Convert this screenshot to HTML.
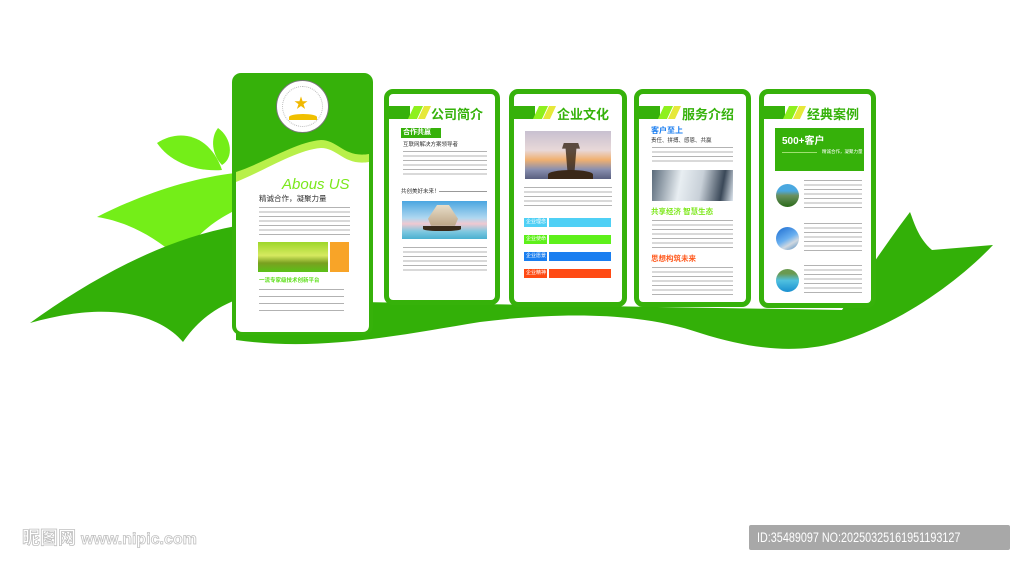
<!DOCTYPE html>
<html><head><meta charset="utf-8"><style>
*{margin:0;padding:0;box-sizing:border-box}
body{width:1024px;height:565px;background:#fff;position:relative;overflow:hidden;font-family:"Liberation Sans","Noto Sans CJK SC",sans-serif}
.a{position:absolute}
.card{position:absolute;background:#fff;border:5px solid #36b10a;border-radius:9px}
.lines{position:absolute;background:repeating-linear-gradient(#fff 0,#fff 2px,#9a9a9a 2px,#9a9a9a 3px,#fff 3px,#fff 4.5px);opacity:.75}
.hd{position:absolute;height:13px;left:0}
.title{position:absolute;font-weight:bold;color:#35b20a;font-size:13px;white-space:nowrap}
.lab{position:absolute;color:#fff;font-size:5px;line-height:9px;padding-left:2px;white-space:nowrap}
</style></head><body>
<svg class="a" style="left:0;top:0" width="1024" height="565">
<path d="M236,300 L236,340 C320,352 400,335 480,322 C560,312 640,312 700,333 C760,352 800,352 835,343 C900,325 960,280 993,245 L932,250 C918,238 914,222 910,212 C885,245 862,280 842,310 L236,300Z" fill="#33b008"/>
<path d="M97,217 C140,195 190,178 236,173 L236,210 C215,220 195,235 180,260 C160,240 130,222 97,217Z" fill="#74ee18"/>
<path d="M157,143 C180,128 210,135 222,170 C195,172 170,162 157,143Z" fill="#74ee18"/>
<path d="M218,128 C232,138 234,158 222,165 C212,155 210,138 218,128Z" fill="#74ee18"/>
<path d="M30,323 C90,280 160,240 236,226 L236,300 C210,310 195,325 183,342 C160,315 110,300 30,323Z" fill="#33b008"/>
</svg>

<!-- panel 1 -->
<div class="a" style="left:232px;top:73px;width:141px;height:262px;background:#36b10a;border-radius:9px"></div>
<svg class="a" style="left:236px;top:140px" width="133" height="192">
<path d="M0,32 C30,22 60,2 85,0 C102,0 108,18 133,14 L133,185 Q133,192 126,192 L7,192 Q0,192 0,185Z" fill="#b8f04a"/>
<path d="M0,42 C30,30 60,10 85,8 C102,8 108,26 133,22 L133,185 Q133,192 126,192 L7,192 Q0,192 0,185Z" fill="#fff"/>
</svg>
<div class="a" style="left:276px;top:80px;width:53px;height:53px;border-radius:50%;background:#fff;border:1px solid #777"></div>
<div class="a" style="left:282px;top:86px;width:41px;height:41px;border-radius:50%;border:1px dotted #bbb"></div>
<div class="a" style="left:289px;top:114px;width:28px;height:6px;background:#f0c000;border-radius:50% 50% 0 0"></div>
<div class="a" style="left:294px;top:96px;font-size:14px;color:#f0b800;line-height:14px">★</div>
<div class="a" style="left:282px;top:176px;font-size:15px;font-style:italic;color:#7be81c">Abous US</div>
<div class="a" style="left:259px;top:193px;font-size:7.5px;color:#333">精诚合作，凝聚力量</div>
<div class="lines" style="left:259px;top:205px;width:91px;height:32px"></div>
<div class="a" style="left:258px;top:242px;width:70px;height:30px;background:linear-gradient(180deg,#9ed62a,#d6ea60 45%,#7aa020 70%,#5ac018)"></div>
<div class="a" style="left:330px;top:242px;width:19px;height:30px;background:#f8a428"></div>
<div class="a" style="left:259px;top:276px;font-size:5.5px;color:#5ee01a;font-weight:bold">一流专家级技术创新平台</div>
<div class="lines" style="left:259px;top:286px;width:85px;height:25px;background:repeating-linear-gradient(#fff 0,#fff 3px,#999 3px,#999 4px,#fff 4px,#fff 7px)"></div>

<!-- panel 2 -->
<div class="card" style="left:384px;top:89px;width:116px;height:216px"></div>
<div class="hd" style="left:389px;top:106px;width:21px;background:#36b10a"></div>
<div class="a" style="left:411px;top:106px;width:9px;height:13px;background:#8ef01e;transform:skewX(-25deg)"></div>
<div class="a" style="left:421px;top:106px;width:7px;height:13px;background:#e6e83a;transform:skewX(-25deg)"></div>
<div class="title" style="left:431px;top:104px">公司简介</div>
<div class="a" style="left:401px;top:128px;width:40px;height:10px;background:#36b10a;color:#fff;font-size:7px;line-height:10px;padding-left:2px;font-weight:bold">合作共赢</div>
<div class="a" style="left:403px;top:140px;font-size:5.5px;color:#333">互联网解决方案领导者</div>
<div class="lines" style="left:403px;top:149px;width:84px;height:27px"></div>
<div class="a" style="left:401px;top:187px;font-size:5.5px;color:#333">共创美好未来！</div>
<div class="a" style="left:439px;top:191px;width:48px;height:1px;background:#999"></div>
<div class="a" style="left:402px;top:201px;width:85px;height:38px;background:linear-gradient(180deg,#4aa6e0,#b0d8f0 45%,#f0c8d0 60%,#80c8e0 80%,#4ab0d0)"></div>
<div class="a" style="left:428px;top:205px;width:30px;height:23px;background:linear-gradient(#e8ddc8,#b8a080);clip-path:polygon(10% 90%,90% 90%,100% 60%,70% 0,30% 0,0 60%)"></div>
<div class="a" style="left:423px;top:226px;width:38px;height:5px;background:#3a2a1a;border-radius:0 0 40% 40%"></div>
<div class="lines" style="left:403px;top:245px;width:84px;height:26px"></div>

<!-- panel 3 -->
<div class="card" style="left:509px;top:89px;width:118px;height:218px"></div>
<div class="hd" style="left:514px;top:106px;width:21px;background:#36b10a"></div>
<div class="a" style="left:536px;top:106px;width:9px;height:13px;background:#8ef01e;transform:skewX(-25deg)"></div>
<div class="a" style="left:546px;top:106px;width:7px;height:13px;background:#e6e83a;transform:skewX(-25deg)"></div>
<div class="title" style="left:557px;top:104px">企业文化</div>
<div class="a" style="left:525px;top:131px;width:86px;height:48px;background:linear-gradient(180deg,#c8c0d0,#e8d8d8 40%,#f0b070 60%,#8a90b0 80%,#5a6080)"></div>
<div class="a" style="left:562px;top:143px;width:18px;height:28px;background:#3a2818;opacity:.8;clip-path:polygon(0 20%,20% 20%,30% 100%,70% 100%,80% 20%,100% 20%,90% 0,10% 0)"></div>
<div class="a" style="left:548px;top:170px;width:45px;height:9px;background:#3a2818;border-radius:50% 50% 0 0"></div>
<div class="lines" style="left:524px;top:185px;width:88px;height:24px"></div>
<div class="a" style="left:524px;top:218px;width:23px;height:9px;background:#4fd0f5"></div><div class="lab" style="left:524px;top:218px">企业理念</div>
<div class="a" style="left:549px;top:218px;width:62px;height:9px;background:#4fd0f5"></div>
<div class="a" style="left:524px;top:235px;width:23px;height:9px;background:#5ef01a"></div><div class="lab" style="left:524px;top:235px">企业使命</div>
<div class="a" style="left:549px;top:235px;width:62px;height:9px;background:#5ef01a"></div>
<div class="a" style="left:524px;top:252px;width:23px;height:9px;background:#1a7ef0"></div><div class="lab" style="left:524px;top:252px">企业愿景</div>
<div class="a" style="left:549px;top:252px;width:62px;height:9px;background:#1a7ef0"></div>
<div class="a" style="left:524px;top:269px;width:23px;height:9px;background:#ff4a14"></div><div class="lab" style="left:524px;top:269px">企业精神</div>
<div class="a" style="left:549px;top:269px;width:62px;height:9px;background:#ff4a14"></div>

<!-- panel 4 -->
<div class="card" style="left:634px;top:89px;width:117px;height:218px"></div>
<div class="hd" style="left:639px;top:106px;width:21px;background:#36b10a"></div>
<div class="a" style="left:661px;top:106px;width:9px;height:13px;background:#8ef01e;transform:skewX(-25deg)"></div>
<div class="a" style="left:671px;top:106px;width:7px;height:13px;background:#e6e83a;transform:skewX(-25deg)"></div>
<div class="title" style="left:682px;top:104px">服务介绍</div>
<div class="a" style="left:651px;top:125px;font-size:8px;color:#1a7ef0;font-weight:bold">客户至上</div>
<div class="a" style="left:651px;top:136px;font-size:5.5px;color:#333">责任、拼搏、感恩、共赢</div>
<div class="lines" style="left:652px;top:145px;width:81px;height:18px"></div>
<div class="a" style="left:652px;top:170px;width:81px;height:31px;background:linear-gradient(100deg,#5a6a7a,#e8eef2 35%,#c8d0d8 60%,#3a4858 85%,#e0e8f0)"></div>
<div class="a" style="left:651px;top:206px;font-size:7.5px;color:#7ee81c;font-weight:bold">共享经济 智慧生态</div>
<div class="lines" style="left:652px;top:218px;width:81px;height:30px"></div>
<div class="a" style="left:651px;top:253px;font-size:7.5px;color:#ff5a1e;font-weight:bold">思想构筑未来</div>
<div class="lines" style="left:652px;top:265px;width:81px;height:30px"></div>

<!-- panel 5 -->
<div class="card" style="left:759px;top:89px;width:117px;height:219px"></div>
<div class="hd" style="left:764px;top:106px;width:21px;background:#36b10a"></div>
<div class="a" style="left:786px;top:106px;width:9px;height:13px;background:#8ef01e;transform:skewX(-25deg)"></div>
<div class="a" style="left:796px;top:106px;width:7px;height:13px;background:#e6e83a;transform:skewX(-25deg)"></div>
<div class="title" style="left:807px;top:104px">经典案例</div>
<div class="a" style="left:775px;top:128px;width:89px;height:43px;background:#36b10a"></div>
<div class="a" style="left:782px;top:132px;font-size:10px;color:#fff;font-weight:bold">500+客户</div>
<div class="a" style="left:782px;top:152px;width:35px;height:1px;background:#9ee070"></div>
<div class="a" style="left:822px;top:149px;font-size:4.5px;color:#fff">精诚合作，凝聚力量</div>
<div class="a" style="left:776px;top:184px;width:23px;height:23px;border-radius:50%;background:linear-gradient(#4aa8e0 30%,#6a9060 50%,#2a6a18)"></div>
<div class="a" style="left:776px;top:227px;width:23px;height:23px;border-radius:50%;background:linear-gradient(150deg,#1a6ad0,#6ab0f0 50%,#d0d8e0 70%,#4a88c0)"></div>
<div class="a" style="left:776px;top:269px;width:23px;height:23px;border-radius:50%;background:linear-gradient(#6a9a50 20%,#50c0e0 50%,#1a90d0)"></div>
<div class="lines" style="left:804px;top:178px;width:58px;height:30px"></div>
<div class="lines" style="left:804px;top:221px;width:58px;height:30px"></div>
<div class="lines" style="left:804px;top:263px;width:58px;height:30px"></div>

<!-- watermark -->
<div class="a" style="left:22px;top:524px;font-size:18px;font-weight:bold;color:#fff;-webkit-text-stroke:0.8px #c0c0c0;white-space:nowrap">昵图网 <span style="font-size:16px">www.nipic.com</span></div>
<div class="a" style="left:749px;top:525px;width:261px;height:25px;background:#a8a8a8;border-radius:2px"></div>
<div class="a" style="left:757px;top:525px;color:#fff;font-size:13.5px;line-height:25px;white-space:nowrap;transform:scaleX(0.8);transform-origin:left">ID:35489097 NO:20250325161951193127</div>
</body></html>
